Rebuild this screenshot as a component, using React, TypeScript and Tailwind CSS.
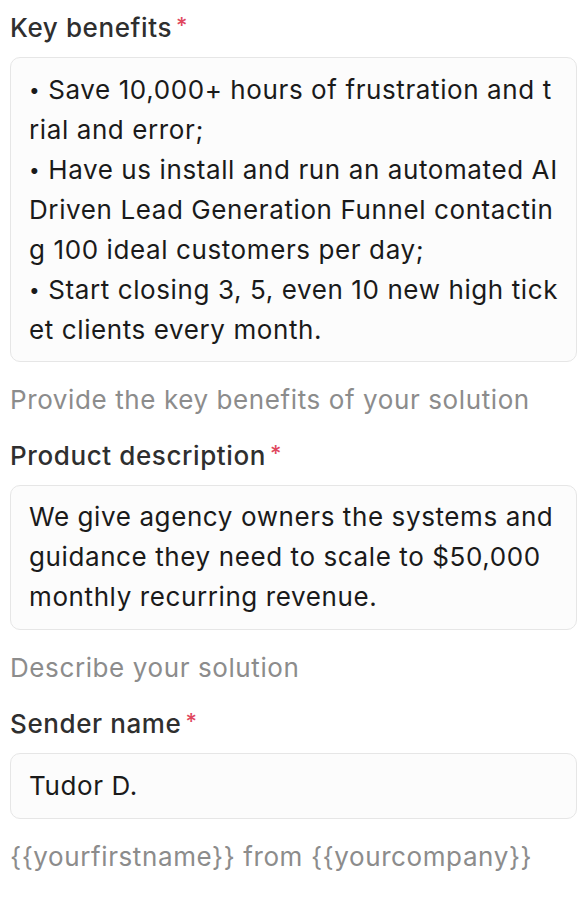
import React from "react";

const font = { fontFamily: "Inter, 'Liberation Sans', sans-serif" };

function Label({ children }: { children: React.ReactNode }) {
  return (
    <div className="flex items-start text-[26px] leading-[32px] font-medium text-[#2f2f2f] tracking-[0.6px]">
      <span>{children}</span>
      <span className="ml-[4px] text-[22px] leading-[26px] text-[#e0475e]">*</span>
    </div>
  );
}

function Line({ text }: { text: string }) {
  if (text.startsWith("• ")) {
    return (
      <div className="whitespace-pre h-[40px]">
        <span className="inline-block text-[19px] leading-[10px] align-[2px]">•</span>
        {" " + text.slice(2)}
      </div>
    );
  }
  return <div className="whitespace-pre h-[40px]">{text}</div>;
}

function Box({ lines, className = "" }: { lines: string[]; className?: string }) {
  return (
    <div className={`rounded-[10px] border border-[#e6e6e6] bg-[#fcfcfc] px-[18px] text-[26px] leading-[40px] text-[#1a1a1a] tracking-[0.6px] ${className}`}>
      {lines.map((l, i) => (
        <Line key={i} text={l} />
      ))}
    </div>
  );
}

function Help({ children }: { children: React.ReactNode }) {
  return <div className="text-[26px] leading-[32px] text-[#8c8c8c] tracking-[0.6px]">{children}</div>;
}

export default function App() {
  return (
    <div style={font} className="w-[588px] h-[904px] bg-white pl-[10px] pr-[11px] pt-[12px]">
      <Label>Key benefits</Label>
      <Box
        className="mt-[13px] pt-[12px] pb-[11px]"
        lines={[
          "• Save 10,000+ hours of frustration and t",
          "rial and error;",
          "• Have us install and run an automated AI",
          "Driven Lead Generation Funnel contactin",
          "g 100 ideal customers per day;",
          "• Start closing 3, 5, even 10 new high tick",
          "et clients every month.",
        ]}
      />
      <div className="mt-[22px]">
        <Help>Provide the key benefits of your solution</Help>
      </div>
      <div className="mt-[24px]">
        <Label>Product description</Label>
      </div>
      <Box
        className="mt-[13px] pt-[11px] pb-[12px]"
        lines={[
          "We give agency owners the systems and",
          "guidance they need to scale to $50,000",
          "monthly recurring revenue.",
        ]}
      />
      <div className="mt-[22px]">
        <Help>Describe your solution</Help>
      </div>
      <div className="mt-[24px]">
        <Label>Sender name</Label>
      </div>
      <Box className="mt-[13px] pt-[12px] pb-[12px]" lines={["Tudor D."]} />
      <div className="mt-[22px]">
        <Help>{"{{yourfirstname}} from {{yourcompany}}"}</Help>
      </div>
    </div>
  );
}
